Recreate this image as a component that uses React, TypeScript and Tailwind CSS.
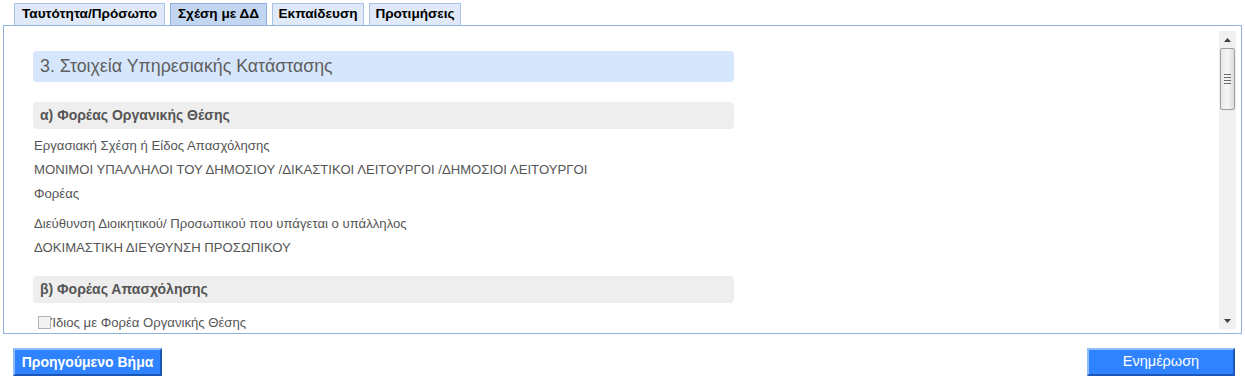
import React from 'react';

const tabs = [
  { label: 'Ταυτότητα/Πρόσωπο', w: 'w-[151px]', active: false },
  { label: 'Σχέση με ΔΔ', w: 'w-[97px]', active: true },
  { label: 'Εκπαίδευση', w: 'w-[92px]', active: false },
  { label: 'Προτιμήσεις', w: 'w-[92px]', active: false },
];

const Scrollbar = () => (
  <div className="w-[17px] mt-[5px] mb-[4px] mr-[5px] bg-[#f0f0f0] flex flex-col items-center">
    <div className="h-[17px] w-full flex items-center justify-center">
      <svg width="7" height="4" viewBox="0 0 7 4">
        <path d="M0 4 L3.5 0 L7 4 Z" fill="#404040" />
      </svg>
    </div>
    {/* thumb */}
    <div className="w-[15px] h-[62px] border border-[#a0a0a0] rounded-[2px] bg-gradient-to-r from-[#e8e8e8] via-[#f6f6f6] to-[#dcdcdc] flex flex-col items-center justify-center gap-[2px]">
      <div className="w-[7px] h-px bg-[#6a6a6a]" />
      <div className="w-[7px] h-px bg-[#6a6a6a]" />
      <div className="w-[7px] h-px bg-[#6a6a6a]" />
      <div className="w-[7px] h-px bg-[#6a6a6a]" />
    </div>
    <div className="flex-1" />
    <div className="h-[17px] w-full flex items-center justify-center">
      <svg width="7" height="4" viewBox="0 0 7 4">
        <path d="M0 0 L3.5 4 L7 0 Z" fill="#404040" />
      </svg>
    </div>
  </div>
);

const Line = ({ children, className = '' }: { children: React.ReactNode; className?: string }) => (
  <p className={`text-[13.15px] text-[#555] pl-[1px] h-[24px] leading-[24px] whitespace-nowrap ${className}`}>{children}</p>
);

export default function App() {
  return (
    <div
      className="w-[1245px] h-[382px] bg-white overflow-hidden"
      style={{ fontFamily: '"Liberation Sans", Arial, sans-serif' }}
    >
      {/* Tabs */}
      <div className="flex gap-[5px] pl-[14px] pt-[3px] h-[25px]">
        {tabs.map((t) => (
          <div
            key={t.label}
            className={`${t.w} h-[22px] flex items-center justify-center text-[13.6px] font-bold text-black border border-b-0 ${
              t.active ? 'bg-[#c3d6f1] border-[#8fb0dc]' : 'bg-[#dfe9f7] border-[#a9c2e6]'
            }`}
          >
            {t.label}
          </div>
        ))}
      </div>

      {/* Panel */}
      <div className="mx-[3px] h-[309px] border border-[#8fb2e0] flex">
        <div className="flex-1 overflow-hidden pl-[29px] pt-[25px]">
          <div className="w-[701px] h-[31px] rounded-[4px] bg-[#d6e6fc] pl-[7px] flex items-center text-[17.8px] text-[#5e5e5e]">
            3. Στοιχεία Υπηρεσιακής Κατάστασης
          </div>

          <div className="w-[701px] h-[27px] mt-[20px] rounded-[4px] bg-[#eeeeee] pl-[7px] flex items-center text-[14px] font-bold text-[#555]">
            α) Φορέας Οργανικής Θέσης
          </div>
          <div className="pt-[5px]">
            <Line>Εργασιακή Σχέση ή Είδος Απασχόλησης</Line>
            <Line>ΜΟΝΙΜΟΙ ΥΠΑΛΛΗΛΟΙ ΤΟΥ ΔΗΜΟΣΙΟΥ /ΔΙΚΑΣΤΙΚΟΙ ΛΕΙΤΟΥΡΓΟΙ /ΔΗΜΟΣΙΟΙ ΛΕΙΤΟΥΡΓΟΙ</Line>
            <Line>Φορέας</Line>
            <Line className="mt-[6px]">Διεύθυνση Διοικητικού/ Προσωπικού που υπάγεται ο υπάλληλος</Line>
            <Line>ΔΟΚΙΜΑΣΤΙΚΗ ΔΙΕΥΘΥΝΣΗ ΠΡΟΣΩΠΙΚΟΥ</Line>
          </div>

          <div className="w-[701px] h-[27px] mt-[16px] rounded-[4px] bg-[#eeeeee] pl-[7px] flex items-center text-[14px] font-bold text-[#555]">
            β) Φορέας Απασχόλησης
          </div>
          <label className="flex items-center pl-[5px] mt-[10px] text-[13.15px] text-[#555] whitespace-nowrap">
            <span className="w-[13px] h-[13px] border border-[#b4b4b4] bg-[#f2f2f2] inline-block" />
            <span>Ίδιος με Φορέα Οργανικής Θέσης</span>
          </label>
        </div>
        <Scrollbar />
      </div>

      {/* Buttons */}
      <div className="flex justify-between pl-[13px] pr-[10px] pt-[14px]">
        <button className="w-[149px] h-[28px] bg-[#2f83ff] border-2 border-t-[#8fbcff] border-l-[#8fbcff] border-b-[#1b57b8] border-r-[#1b57b8] text-white text-[14px] font-bold">
          Προηγούμενο Βήμα
        </button>
        <button className="w-[148px] h-[28px] bg-[#2f83ff] border-2 border-t-[#8fbcff] border-l-[#8fbcff] border-b-[#1b57b8] border-r-[#1b57b8] text-white text-[14.5px]">
          Ενημέρωση
        </button>
      </div>
    </div>
  );
}
